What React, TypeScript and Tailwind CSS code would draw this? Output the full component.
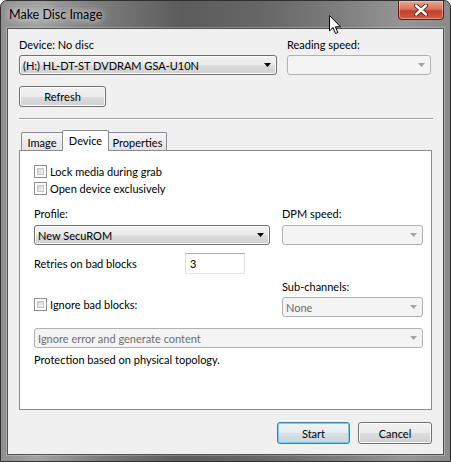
import React from "react";

const FONT = "font-['Lato','Noto_Sans',sans-serif] text-[11px] leading-[15px]";

function Arrow({ disabled }: { disabled?: boolean }) {
  return (
    <svg width="7" height="4" viewBox="0 0 7 4" className="shrink-0">
      <path d="M0 0 H7 L3.5 4 Z" fill={disabled ? "#a3a3a3" : "#000"} />
    </svg>
  );
}

function Combo({
  text,
  disabled,
  className = "",
}: {
  text?: string;
  disabled?: boolean;
  className?: string;
}) {
  const skin = disabled
    ? "border-[#adb2b5] bg-[#f4f4f4] text-[#6d6d6d]"
    : "border-[#707070] bg-[linear-gradient(to_bottom,#f2f2f2_0%,#ebebeb_50%,#dddddd_50%,#cfcfcf_100%)] shadow-[inset_0_0_0_1px_#fbfbfb] text-black";
  return (
    <div
      className={`flex h-[20px] items-center justify-between rounded-[3px] border pl-[3px] pr-[5px] ${skin} ${className}`}
    >
      <span className="truncate">{text ?? ""}</span>
      <Arrow disabled={disabled} />
    </div>
  );
}

function Button({
  label,
  primary,
  className = "",
}: {
  label: string;
  primary?: boolean;
  className?: string;
}) {
  const skin = primary
    ? "border-[#3c7fb1] bg-[linear-gradient(to_bottom,#eef4f8_0%,#e6eef3_50%,#d6e1e8_50%,#c9d6de_100%)] shadow-[inset_0_0_0_1px_#74cdf0]"
    : "border-[#707070] bg-[linear-gradient(to_bottom,#f2f2f2_0%,#ebebeb_50%,#dddddd_50%,#cfcfcf_100%)] shadow-[inset_0_0_0_1px_#fbfbfb]";
  return (
    <div
      className={`flex items-center justify-center rounded-[3px] border text-black ${skin} ${className}`}
    >
      {label}
    </div>
  );
}

function CheckBox() {
  return (
    <div className="h-[13px] w-[13px] shrink-0 border border-[#8e8f8f] bg-white p-[2px]">
      <div className="h-full w-full border border-[#c4c4c4] bg-[linear-gradient(135deg,#d5d5d5_0%,#e9e9e9_60%,#f4f4f4_100%)]" />
    </div>
  );
}

function CheckRow({ label }: { label: string }) {
  return (
    <div className="flex h-[17px] items-center gap-[3px]">
      <CheckBox />
      <span>{label}</span>
    </div>
  );
}

function CloseGlyph() {
  return (
    <svg width="14" height="12" viewBox="0 0 14 12">
      <path
        d="M2 1.5 L12 10.5 M12 1.5 L2 10.5"
        stroke="#4a1c14"
        strokeWidth="4.2"
        strokeLinecap="round"
      />
      <path
        d="M2 1.5 L12 10.5 M12 1.5 L2 10.5"
        stroke="#ffffff"
        strokeWidth="2.4"
        strokeLinecap="round"
      />
    </svg>
  );
}

function Pointer() {
  return (
    <svg
      width="13"
      height="20"
      viewBox="0 0 13 20"
      className="absolute left-[329px] top-[15px]"
    >
      <path
        d="M0.5 0.5 L0.5 16 L4 12.5 L6.5 18.5 L8.8 17.5 L6.4 11.8 L11.5 11.8 Z"
        fill="#fff"
        stroke="#000"
        strokeWidth="1"
        strokeLinejoin="round"
      />
    </svg>
  );
}

export default function App() {
  return (
    <div className={`relative h-[462px] w-[451px] overflow-hidden bg-white ${FONT}`}>
      {/* window frame */}
      <div className="flex h-[462px] w-[451px] flex-col rounded-t-[7px] border border-[#2f2f2f] bg-[linear-gradient(to_right,#8f8f8f_0%,#a2a2a2_8%,#7c7c7c_22%,#5c5c5c_40%,#666666_58%,#7d7d7d_75%,#969696_90%,#8a8a8a_100%)]">
        {/* title bar */}
        <div className="flex h-[27px] shrink-0 items-start justify-between pl-[8px] pr-[6px]">
          <span className="mt-[6px] text-[12.5px] text-black [text-shadow:0_0_6px_rgba(255,255,255,0.9),0_0_12px_rgba(255,255,255,0.6)]">
            Make Disc Image
          </span>
          <div className="flex h-[19px] w-[46px] items-center justify-center rounded-b-[4px] border border-t-0 border-[#5a2218] bg-[linear-gradient(to_bottom,#e8a898_0%,#d7735d_45%,#c4412a_55%,#cf5a3f_100%)] shadow-[inset_0_0_0_1px_rgba(255,220,210,0.45)]">
            <CloseGlyph />
          </div>
        </div>

        {/* client area */}
        <div className="mx-[6px] mb-[6px] flex flex-1 flex-col border border-[#505050] bg-[#f0f0f0] px-[11px] pt-[8px] shadow-[0_0_0_1px_rgba(255,255,255,0.25)]">
          {/* device selection */}
          <div className="flex gap-[10px]">
            <div className="flex w-[258px] flex-col">
              <span className="text-black">Device: No disc</span>
              <Combo className="mt-[3px]" text="(H:) HL-DT-ST DVDRAM GSA-U10N" />
            </div>
            <div className="flex w-[144px] flex-col">
              <span className="text-black">Reading speed:</span>
              <Combo className="mt-[3px]" disabled />
            </div>
          </div>

          <Button label="Refresh" className="mt-[11px] h-[21px] w-[87px]" />

          {/* etched separator */}
          <div className="mt-[11px] h-[2px] w-[414px] border-t border-[#a0a0a0] bg-white" />

          {/* tabs */}
          <div className="mt-[10px] flex items-end pl-[2px]">
            <div className="flex h-[18px] w-[41px] items-center justify-center rounded-tl-[2px] border-l border-t border-[#898c95] bg-[linear-gradient(to_bottom,#f6f6f6,#e3e3e3)] pt-[2px]">
              Image
            </div>
            <div className="relative z-10 -mb-px flex h-[21px] w-[47px] items-start justify-center rounded-t-[2px] border-x border-t border-[#898c95] bg-white pt-[2px]">
              Device
            </div>
            <div className="flex h-[18px] w-[58px] items-center justify-center rounded-tr-[2px] border-r border-t border-[#898c95] bg-[linear-gradient(to_bottom,#f6f6f6,#e3e3e3)] pt-[2px]">
              Properties
            </div>
          </div>

          {/* tab page */}
          <div className="flex h-[260px] w-[413px] flex-col border border-[#898c95] bg-white pl-[14px] pt-[12px] text-black">
            <CheckRow label="Lock media during grab" />
            <CheckRow label="Open device exclusively" />

            <div className="mt-[9px] flex gap-[12px]">
              <div className="flex w-[236px] flex-col">
                <span>Profile:</span>
                <Combo className="mt-[4px]" text="New SecuROM" />
              </div>
              <div className="flex w-[141px] flex-col">
                <span>DPM speed:</span>
                <Combo className="mt-[4px]" disabled />
              </div>
            </div>

            <div className="mt-[8px] flex h-[21px] items-center">
              <span className="w-[151px]">Retries on bad blocks</span>
              <div className="flex h-[21px] w-[60px] items-center border border-[#abadb3] border-x-[#dbdfe6] border-b-[#e3e9ef] bg-white pl-[4px]">
                3
              </div>
            </div>

            <div className="mt-[5px] flex gap-[12px]">
              <div className="w-[236px] pt-[19px]">
                <div className="flex h-[13px] items-center gap-[3px]">
                  <CheckBox />
                  <span>Ignore bad blocks:</span>
                </div>
              </div>
              <div className="flex w-[141px] flex-col">
                <span>Sub-channels:</span>
                <Combo className="mt-[3px]" text="None" disabled />
              </div>
            </div>

            <Combo
              className="mt-[11px] w-[389px]"
              text="Ignore error and generate content"
              disabled
            />

            <span className="mt-[4px]">Protection based on physical topology.</span>
          </div>

          {/* dialog buttons */}
          <div className="mt-[12px] flex justify-end gap-[8px]">
            <Button label="Start" primary className="h-[22px] w-[73px]" />
            <Button label="Cancel" className="h-[22px] w-[74px]" />
          </div>
        </div>
      </div>
      <Pointer />
    </div>
  );
}
